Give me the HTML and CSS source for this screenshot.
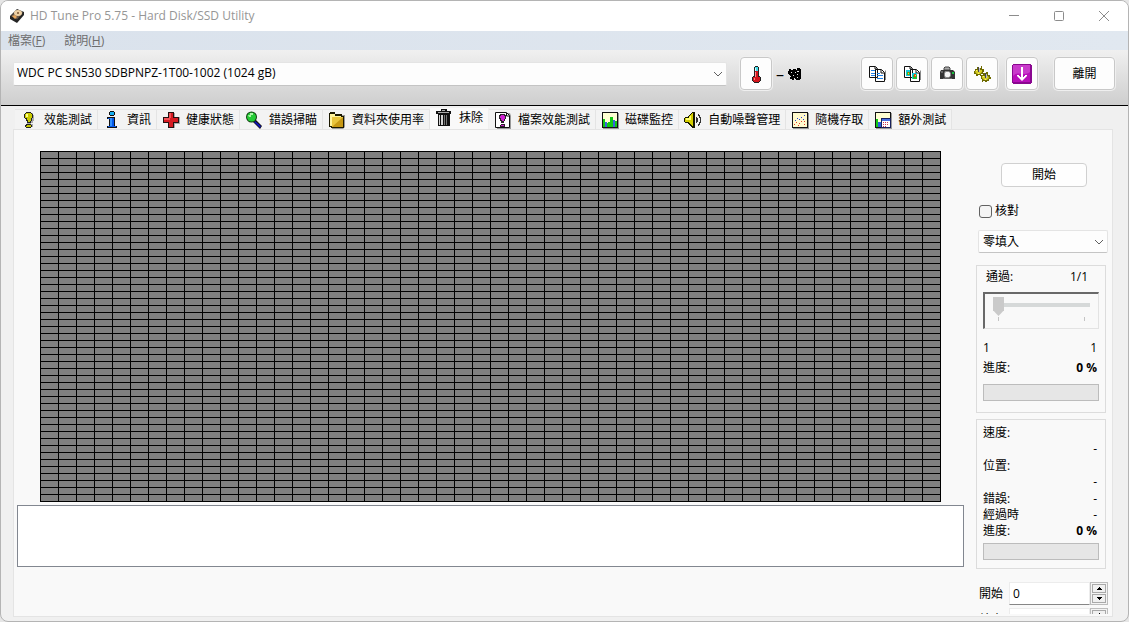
FILE: index.html
```html
<!DOCTYPE html>
<html lang="zh-Hant">
<head>
<meta charset="utf-8">
<title>HD Tune Pro 5.75 - Hard Disk/SSD Utility</title>
<link rel="stylesheet" href="styles.css">
</head>
<body>
<div class="window">
  <header class="titlebar">
    <svg class="app-icon" viewBox="0 0 16 16"><path d="M1 8 8 1l7 3v3l-7 8-7-4z" fill="#252525"/><path d="M2 8 8 2l6 2.500-6 7z" fill="#6a5a4c"/><ellipse cx="9" cy="5" rx="4" ry="3" fill="#efd2a6"/><circle cx="9" cy="5" r="1" fill="#76502e"/><path d="m3 8 3-1 2 2-2 2z" fill="#e9a75c"/></svg>
    <h1 class="title">HD Tune Pro 5.75 - Hard Disk/SSD Utility</h1>
    <div class="caption-buttons">
      <button class="caption" aria-label="最小化"><svg viewBox="0 0 12 12"><path d="M1 5.500h10"/></svg></button>
      <button class="caption" aria-label="最大化"><svg viewBox="0 0 12 12"><rect x="1.500" y="1.500" width="9" height="9" rx="1"/></svg></button>
      <button class="caption" aria-label="關閉"><svg viewBox="0 0 12 12"><path d="m1 1 10 10M11 1 1 11"/></svg></button>
    </div>
  </header>

  <nav class="menubar">
    <button class="menu">檔案(<u>F</u>)</button>
    <button class="menu">說明(<u>H</u>)</button>
  </nav>

  <div class="toolbar">
    <select class="combo drive" aria-label="磁碟機"><option>WDC PC SN530 SDBPNPZ-1T00-1002 (1024 gB)</option></select>
    <button class="tool" aria-label="溫度"><svg viewBox="0 0 16 18"><path d="M6 2h1V1h3v1h1v9h1v1h1v4h-1v1h-1v1H6v-1H5v-1H4v-4h1v-1h1z" fill="#222"/><path d="M7 2h3v4H7z" fill="#45dce8"/><path d="M7 6h3v6h2v4h-1v1H6v-1H5v-4h2z" fill="#d3151c"/><path d="M7 3h1v3H7z" fill="#d5ffff"/><path d="M7 7h1v5H7zM6 13h1v2H6z" fill="#ff8a8a"/></svg></button>
    <span class="temp"><span>–</span><svg viewBox="0 0 13 12"><path d="M1 1h2v1h2V1h3v1h1V0h3v1h1v10h-1v1H8v-1H7v-1H6v2H4v-1H2V9h1V8H2V7H1V6H0V3h1zM9 3v1h2V3zM7 4v1h1V4zM9 6v1h1V6zM3 4v1h1V4zM9 9v1h1V9zM5 7v1h1V7z" fill-rule="evenodd"/></svg></span>
    <div class="tools">
      <button class="tool" aria-label="複製文字"><svg viewBox="0 0 18 18"><path d="M9 15h9V6l-1-1v11H9z" fill="#888"/><path d="M1.500 1.500h6l2 2v9h-8zM7.500 4.500h6l3 3v9h-9z" fill="#fff" stroke="#111"/><path d="M7 2v2h2M13 5v3h3" fill="none" stroke="#111"/><path d="M3 5.500h4M3 8.500h4M3 10.500h4M9 8.500h3M9 10.500h6M9 13.500h6" stroke="#1f80e8"/></svg></button>
      <button class="tool" aria-label="複製圖像"><svg viewBox="0 0 18 18"><path d="M9 15h9V6l-1-1v11H9z" fill="#888"/><path d="M1.500 1.500h6l2 2v9h-8zM7.500 4.500h6l3 3v9h-9z" fill="#fff" stroke="#111"/><path d="M7 2v2h2M13 5v3h3" fill="none" stroke="#111"/><path d="M3 5h4v6H3zM9 8h5v6H9z" fill="#18c7db"/><path d="M4 7h3v3H4zM10 10h4v4h-4z" fill="#22bf35"/><path d="M5 7h1v3H5zM11 9h2v3h-2z" fill="#e44616"/><path d="M5 8h1v1H5zM12 10h1v1h-1z" fill="#ffe32a"/></svg></button>
      <button class="tool" aria-label="儲存螢幕擷圖"><svg viewBox="0 0 18 18"><path d="M6 5V3l1-1h4l1 1v2z" fill="#aaa" stroke="#444"/><path d="M3 5h12l2 2v7H2V7z" fill="#333"/><path d="M3 6h2v2H3zM5 13h9v1H5z" fill="#666"/><path d="M7 6h4l2 2v3l-2 2H7l-1-2V8z" fill="#888"/><path d="M8 7h3l1 1v3l-1 1H8l-1-1V8z" fill="#f4f4f4"/><path d="M14 7h2v2h-2z" fill="#16c33c"/></svg></button>
      <button class="tool" aria-label="選項"><svg viewBox="0 0 18 18"><path d="M2 4h2V2h2v1h2V1h1v3h2v3h-1v2H8v2H7v-1H5v1H3V9H1V6h1zM8 10h2V8h2v1h1V7h2v3h2v2h1v2h-2v2h-2v1h-2v-1h-2v1h-1v-3H8z" fill="#6f6b00"/><path d="M3 5h6v2L7 9H4L2 7zM9 11h6l1 2-2 2h-3l-2-2z" fill="#d6cc22"/><path d="M3 5h1v1H3zM5 8h1v1H5zM10 11h1v1h-1zM12 14h1v1h-1z" fill="#fff46a"/><path d="M5 2h1v5H5zM12 8h1v5h-1z" fill="#484848"/><path d="M6 3h1v4H6zM13 9h1v4h-1z" fill="#bbb"/></svg></button>
      <button class="tool tool-save" aria-label="儲存"><svg class="large" viewBox="0 0 20 20"><path d="M1 0h18v1h1v18h-1v1H1v-1H0V1h1z" fill="#8a0790"/><path d="M1 1h17v17H1z" fill="#b80fba"/><path d="M1 1h17v7C12 13 6 6 1 12z" fill="#c93acb"/><path d="M9 3h2v10h1v-1h1v-1h2v1l-5 5-5-5v-1h2v1h1v1h1z" fill="#fff"/></svg></button>
      <button class="exit">離開</button>
    </div>
  </div>

  <main class="content">
    <div class="tabs" role="tablist">
      <button class="tab" role="tab"><svg viewBox="0 0 18 18"><path d="M7 2h6v2h1v6h-1v2h-2v1h2v3h-2v1H8v-1H7z" fill="#aaa"/><path d="M6 1h5v1h1v1h1v4h-1v3h-1v2H7v-2H6V8H5V7H4V3h1V2h1zM6 13h5v1h1v2h-1v1H6v-1H5v-2h1z" fill="#222"/><path d="M6 2h5v1h1v4h-1v3h-1v1H8V9H7V7H5V3h1zM7 14h4v2H6v-1h1z" fill="#c9ca00"/><path d="M6 3h2v3H6z" fill="#ffff88"/></svg>效能測試</button>
      <button class="tab" role="tab"><svg viewBox="0 0 18 18"><path d="M7 0h4v1h1v3h-1v1H7V4H6V1h1zM5 6h7v9h2v2H4v-2h2V8H4V6z" fill="#111"/><path d="M7 1h4v3H7z" fill="#16aff2"/><path d="M5 7h6v9H5v-1h2V8H5zM11 15h2v1h-2z" fill="#0758e8"/><path d="M7 7h2v8H7z" fill="#3291ff"/></svg>資訊</button>
      <button class="tab" role="tab"><svg viewBox="0 0 18 18"><path d="M7 2h6v4h5v7h-5v4H7z" fill="#aaa"/><path d="M6 1h6v5h5v6h-5v5H6v-5H1V6h5z" fill="#241010"/><path d="M7 2h4v5h5v4h-5v5H7v-5H2V7h5z" fill="#d51b22"/><path d="M7 2h2v5H7zM2 7h6v2H2z" fill="#f45359"/></svg>健康狀態</button>
      <button class="tab" role="tab"><svg viewBox="0 0 18 18"><path d="m10 8 7 7-2 3-7-7z" fill="#111"/><path d="m10 10 6 5-1 2-6-6z" fill="#1015bd"/><circle cx="6.500" cy="6" r="5.500" fill="#124012"/><circle cx="6.500" cy="6" r="4.500" fill="#25cb36"/><path d="M3 4h2V2h3v2H6v2H4z" fill="#a8f5a3"/></svg>錯誤掃瞄</button>
      <button class="tab" role="tab"><svg viewBox="0 0 18 18"><path d="M4 4h13v12l-2 2H4z" fill="#999"/><path d="M1 2h1V1h5v2h7v2h2v12H3v-1H1z" fill="#1b1800"/><path d="M2 3h5v2h6v1H4v9H2z" fill="#fff39b"/><path d="M4 6h11v10H4z" fill="#e8c43c"/><path d="m5 15 9-8h1v9H4z" fill="#c79813"/></svg>資料夾使用率</button>
      <button class="tab active" role="tab" aria-selected="true"><svg viewBox="0 0 18 18"><path d="M6 0h6v2h4v3h-1v12H3V5H1V2h5z" fill="#111"/><path d="M7 1h3v1H7zM3 3h11v1H3z" fill="#aaa"/><path d="M4 6h1v10H4zM6 6h2v10H6z" fill="#d5d5d5"/><path d="M9 6h1v10H9zM11 6h1v10h-1z" fill="#777"/></svg>抹除</button>
      <button class="tab" role="tab"><svg viewBox="0 0 18 18"><path d="M3 2h13l1 3v13H3z" fill="#999"/><path d="M1.500 1.500h11l3 3v12h-14z" fill="#fff" stroke="#111"/><path d="M12.500 2v3h3" fill="none" stroke="#111"/><path d="M6 3h5v1h1v4h-1v2h-1v2H7v-2H6V8H5V4h1zM7 13h4v3H6v-2h1z" fill="#292129"/><path d="M7 4h3v1h1v3h-1v2H8V9H7V7H6V5h1zM7 14h3v1H7z" fill="#cf22d2"/></svg>檔案效能測試</button>
      <button class="tab" role="tab"><svg viewBox="0 0 18 18"><path d="M2 2h16v16H2z" fill="#999"/><path d="M1 1h16v16H1z" fill="#111"/><path d="M2 2h14v14H2z" fill="#ffffd2"/><path d="M2 8h2v8H2zM7 11h2v5H7zM9 6h3v10H9zM14 10h2v6h-2z" fill="#12c914"/><path d="M4 11h2v5H4zM12 9h2v7h-2z" fill="#3763df"/><path d="M6 12h1v4H6z" fill="#12c914"/></svg>磁碟監控</button>
      <button class="tab" role="tab"><svg viewBox="0 0 18 18"><path d="M1 6h3V5h1V4h1V3h1V2h1V1h3v16H8v-1H7v-1H6v-1H5v-1H4v-1H1v-1H0V7h1z" fill="#181800"/><path d="M1 7h4V5h1V4h1V3h1V2h1v13H8v-1H7v-1H6v-1H5v-1H1z" fill="#d5cf00"/><path d="M2 7h3V6h1V5h1v4H2z" fill="#ffff72"/><path d="M12 6h1v1h1v4h-1v1h-1zM14 3h1v1h1v2h1v6h-1v2h-1v1h-1v-2h1v-2h1V7h-1V5h-1z" fill="#333"/></svg>自動噪聲管理</button>
      <button class="tab" role="tab"><svg viewBox="0 0 18 18"><path d="M2 2h16v16H2z" fill="#999"/><path d="M1 1h16v16H1z" fill="#111"/><path d="M2 2h14v14H2z" fill="#fff9cd"/><path d="M4 9h1v1H4zM6 7h1v1H6zM8 8h1v1H8zM10 6h1v1h-1zM13 4h1v1h-1zM12 8h1v1h-1z" fill="#253cda"/><path d="M3 13h1v1H3zM5 11h1v1H5zM8 12h1v1H8zM10 10h1v1h-1zM13 13h1v1h-1zM7 14h1v1H7zM13 10h1v1h-1z" fill="#e43728"/></svg>隨機存取</button>
      <button class="tab" role="tab"><svg viewBox="0 0 18 18"><path d="M2 2h16v16H2z" fill="#999"/><path d="M1 1h16v16H1z" fill="#111"/><path d="M2 2h14v14H2z" fill="#ffffd2"/><path d="M2 8h2v8H2z" fill="#12c914"/><path d="M4 11h3v5H4z" fill="#285cdb"/><path d="M7 7h10v10H7z" fill="#17205b"/><path d="M8 8h8v2H8z" fill="#4770e2"/><path d="M8 10h8v6H8z" fill="#fff"/><path d="M9 11h1v1H9zM11 11h1v1h-1zM13 11h1v1h-1zM9 13h1v1H9zM11 13h1v1h-1zM13 13h1v1h-1zM9 15h1v1H9zM11 15h1v1h-1z" fill="#c83450"/></svg>額外測試</button>
    </div>

    <section class="panel">
      <div class="clip">
        <div class="work">
          <div class="blocks" role="img" aria-label="抹除區塊圖"></div>
          <textarea class="log" aria-label="記錄" readonly></textarea>
        </div>
        <aside class="side">
          <button class="start">開始</button>
          <label class="verify"><input type="checkbox">核對</label>
          <select class="combo mode" aria-label="抹除方式"><option>零填入</option></select>

          <div class="group passes">
            <div class="row pass"><label for="passes">通過:</label><span>1/1</span></div>
            <div class="slider"><input id="passes" type="range" min="1" max="10" value="1" disabled><div class="ticks"><i></i><i></i></div></div>
            <div class="row limits"><span>1</span><span>1</span></div>
            <div class="row"><span>進度:</span><b>0 %</b></div>
            <div class="bar" role="progressbar" aria-label="通過進度" aria-valuenow="0"></div>
          </div>

          <div class="group status">
            <div class="pair"><span>速度:</span><span class="value">-</span></div>
            <div class="pair"><span>位置:</span><span class="value">-</span></div>
            <div class="row"><span>錯誤:</span><span>-</span></div>
            <div class="row"><span>經過時</span><span>-</span></div>
            <div class="row total"><span>進度:</span><b>0 %</b></div>
            <div class="bar" role="progressbar" aria-label="總進度" aria-valuenow="0"></div>
          </div>

          <div class="fields">
            <div class="field"><label for="from">開始</label><input id="from" type="text" value="0"><div class="spin"><button aria-label="增加"><svg viewBox="0 0 5 3"><path d="M2 0h1v1h1v1h1v1H0V2h1V1h1z"/></svg></button><button aria-label="減少"><svg viewBox="0 0 5 3"><path d="M0 0h5v1H4v1H3v1H2V2H1V1H0z"/></svg></button></div></div>
            <div class="field"><label for="to">結束</label><input id="to" type="text"><div class="spin"><button aria-label="增加"><svg viewBox="0 0 5 3"><path d="M2 0h1v1h1v1h1v1H0V2h1V1h1z"/></svg></button><button aria-label="減少"><svg viewBox="0 0 5 3"><path d="M0 0h5v1H4v1H3v1H2V2H1V1H0z"/></svg></button></div></div>
          </div>
        </aside>
      </div>
    </section>
  </main>
</div>
</body>
</html>
```
FILE: styles.css
```css
* { box-sizing: border-box; }
body {
  margin: 0;
  background: #e6e6e6;
  color: #000;
  font: 12px/16px "Open Sans", "Noto Sans CJK TC", sans-serif;
}
button, input, select, textarea { margin: 0; font: inherit; color: inherit; }
button { padding: 0; border: 0; background: none; }
svg { display: block; flex: none; }

.window {
  display: flex;
  flex-direction: column;
  height: 100vh;
  overflow: hidden;
  border: 1px solid #b4b4b4;
  border-radius: 8px;
  background: #f0f0f0;
}

.titlebar { display: flex; align-items: center; flex: none; height: 30px; padding: 0 2px 0 8px; background: #fff; }
.app-icon { width: 16px; height: 16px; margin-right: 5px; }
.title { flex: 1; margin: 0; font-size: 12px; font-weight: 400; color: #969696; }
.caption-buttons { display: flex; }
.caption { display: grid; place-items: center; width: 45px; height: 28px; }
.caption svg { width: 12px; height: 12px; fill: none; stroke: #8c8c8c; }

.menubar { display: flex; gap: 19px; flex: none; height: 19px; padding-left: 7px; background: linear-gradient(90deg, #dae2ec, #e1e8f0); }
.menu { color: #6d6d6d; }

.toolbar {
  display: flex;
  align-items: center;
  flex: none;
  height: 56px;
  padding: 0 13px 8px 12px;
  border-bottom: 1px solid #000;
  background: linear-gradient(#f0f0f0, #cecece);
}
.combo {
  appearance: none;
  height: 24px;
  padding: 0 24px 0 4px;
  border: 1px solid #e4e4e4;
  border-bottom-color: #c4c4c4;
  border-radius: 2px;
  background: #fdfdfd url("data:image/svg+xml,%3Csvg xmlns='http://www.w3.org/2000/svg' width='10' height='6'%3E%3Cpath d='M1 1l4 4 4-4' fill='none' stroke='%23606060'/%3E%3C/svg%3E") no-repeat right 3px center;
}
.drive { flex: 1; min-width: 0; padding: 0 24px 2px 3px; }
.tool, .exit { display: grid; place-items: center; width: 32px; height: 33px; border: 1px solid #c8c8c8; border-radius: 4px; background: #fdfdfd; box-shadow: 0 0 0 1px #efefef; }
.tool svg { width: 18px; height: 18px; }
.tool svg.large { width: 20px; height: 20px; }
.drive + .tool { margin-left: 13px; }
.temp { display: flex; align-items: center; width: 89px; padding-left: 4px; font-size: 16px; }
.temp svg { width: 13px; height: 12px; margin-left: 4px; }
.tools { display: flex; gap: 3px; }
.tool-save { margin-left: 5px; }
.exit { width: 61px; margin-left: 13px; }

.content { display: flex; flex-direction: column; flex: 1; min-height: 0; padding: 0 15px 4px 12px; }
.tabs { display: flex; align-items: flex-end; flex: none; height: 23px; padding-left: 2px; }
.tab { display: flex; align-items: center; height: 20px; padding: 0 5px; border: solid #e4e4e4; border-width: 1px 1px 0 0; background: #f3f3f3; }
.tab svg { width: 18px; height: 18px; margin-right: 6px; }
.tab.active { height: 22px; padding-bottom: 2px; border-color: #f0f0f0; background: #f9f9f9; }
.panel { flex: 1; min-height: 0; padding-bottom: 2px; border: 1px solid #e4e4e4; background: #f9f9f9; }
.clip { display: flex; gap: 12px; height: 100%; overflow: hidden; padding: 0 4px 0 3px; }

.work { flex: 1; min-width: 0; padding-top: 21px; }
.blocks {
  width: 901px;
  height: 351px;
  margin: 0 auto 3px;
  background:
    repeating-linear-gradient(90deg, #000 0 1px, transparent 1px 18px),
    repeating-linear-gradient(#000 0 1px, #808080 1px 7px);
}
.log { display: block; width: 100%; height: 62px; resize: none; border: 1px solid #828790; background: #fff; }

.side { display: flex; flex-direction: column; flex: none; width: 132px; padding-top: 33px; }
.side > * { flex: none; }
.start { align-self: center; width: 86px; height: 24px; margin-left: 4px; border: 1px solid #d0d0d0; border-radius: 4px; background: #fefefe; }
.verify { display: flex; align-items: center; gap: 3px; margin: 16px 0 11px 3px; }
.verify input { appearance: none; width: 13px; height: 13px; border: 1px solid #626262; border-radius: 3px; background: #f5f5f5; }
.mode { width: 130px; height: 23px; margin-left: 2px; }
.group { width: 130px; padding: 3px 6px 0; border: 1px solid #dcdcdc; }
.passes { height: 148px; margin-top: 12px; }
.status { height: 150px; margin-top: 6px; padding-top: 5px; }
.row { display: flex; justify-content: space-between; align-items: center; padding-right: 2px; }
.pass { padding: 0 11px 0 3px; }
.slider { height: 37px; margin-top: 7px; padding: 3px 8px 0; border: solid #e3e3e3; border-width: 2px 1px 1px 2px; border-top-color: #696969; border-left-color: #696969; }
.slider input { appearance: none; display: block; width: 100%; height: 19px; background: linear-gradient(#d6d9d9, #d6d9d9) center 6px / 100% 4px no-repeat; }
.slider input::-webkit-slider-thumb { appearance: none; width: 11px; height: 19px; background: #cacaca; clip-path: polygon(0 0, 100% 0, 100% 70%, 50% 100%, 0 70%); }
.ticks { display: flex; justify-content: space-between; padding: 1px 5px; }
.ticks i { width: 1px; height: 4px; background: #c4c4c4; }
.limits { margin: 11px 0 4px; }
.bar { height: 17px; margin-top: 8px; border: 1px solid #bcbcbc; background: #e6e6e6; }
.pair { display: flex; flex-direction: column; height: 33px; }
.value { align-self: flex-end; padding-right: 2px; }
.total { margin-bottom: -4px; }
.fields { display: flex; flex-direction: column; gap: 3px; margin: 13px 0 0 3px; }
.field { display: flex; align-items: center; }
.field label { width: 30px; }
.field input { flex: 1; min-width: 0; height: 23px; padding: 0 3px; border: 1px solid #ececec; border-bottom-color: #868686; background: #fff; }
.spin { display: grid; gap: 1px; width: 18px; height: 23px; padding: 1px; border: 1px solid #bdbdbd; background: #f4f4f4; }
.spin button { display: grid; place-items: center; border: 1px solid #a9a9a9; background: #f0f0f0; }
.spin svg { width: 5px; height: 3px; }
```
